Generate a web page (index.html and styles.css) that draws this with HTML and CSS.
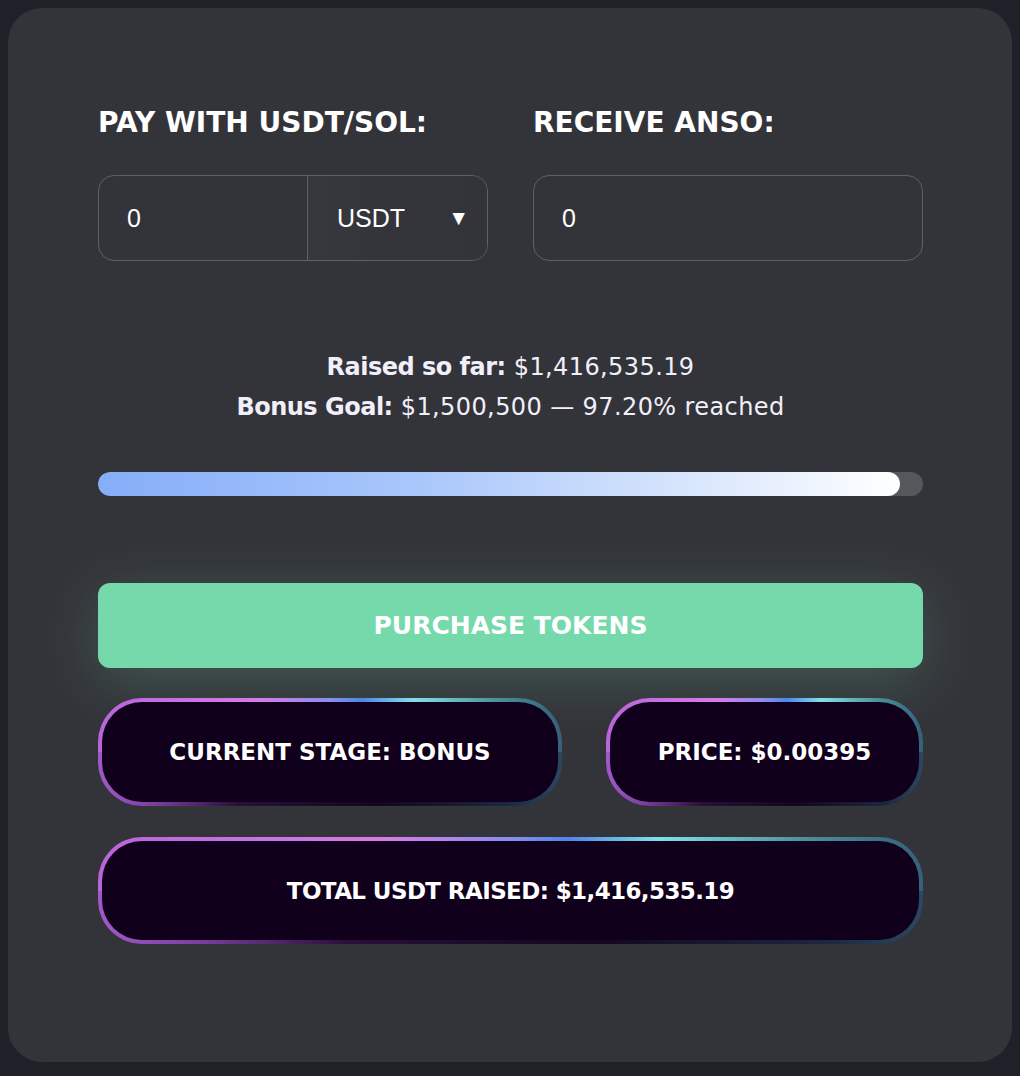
FILE: index.html
```html
<!DOCTYPE html>
<html lang="en">
<head>
<meta charset="utf-8">
<title>Presale</title>
<link rel="stylesheet" href="styles.css">
</head>
<body>
<div class="card">
  <div class="fields">
    <div class="field">
      <div class="field-label">PAY WITH USDT/SOL:</div>
      <div class="inputbox split">
        <div class="value">0</div>
        <div class="select"><span>USDT</span><span class="arrow">▼</span></div>
      </div>
    </div>
    <div class="field">
      <div class="field-label">RECEIVE ANSO:</div>
      <div class="inputbox">
        <div class="value">0</div>
      </div>
    </div>
  </div>

  <div class="stats">
    <div><b>Raised so far:</b> $1,416,535.19</div>
    <div><b>Bonus Goal:</b> $1,500,500 — 97.20% reached</div>
  </div>

  <div class="progress"><div class="fill" style="width: 97.2%"></div></div>

  <div class="buy">PURCHASE TOKENS</div>

  <div class="pills">
    <div class="pill">CURRENT STAGE: BONUS</div>
    <div class="pill">PRICE: $0.00395</div>
  </div>
  <div class="pill total">TOTAL USDT RAISED: $1,416,535.19</div>
</div>
</body>
</html>
```
FILE: styles.css
```css
html, body {
  background: #1f2028;
}
body {
  margin: 8px;
  font-family: "DejaVu Sans", "Open Sans", sans-serif;
  color: #ffffff;
}
.card {
  background: #333439;
  border-radius: 34px;
  padding: 95px 89px 118px 90px;
  min-height: 1054px;
  box-sizing: border-box;
}
.fields {
  display: grid;
  grid-template-columns: 390px 390px;
  column-gap: 45px;
}
.field-label {
  font-size: 28px;
  font-weight: 700;
  line-height: 40px;
  margin-bottom: 32px;
}
.inputbox {
  height: 86px;
  box-sizing: border-box;
  border: 1px solid #5f6065;
  border-radius: 16px;
  display: flex;
  align-items: center;
  font-family: "Liberation Sans", Arial, sans-serif;
  font-size: 25px;
  overflow: hidden;
}
.value {
  padding-left: 28px;
  flex: 1;
}
.select {
  width: 180px;
  align-self: stretch;
  border-left: 1px solid #5f6065;
  display: flex;
  align-items: center;
  justify-content: space-between;
  padding: 0 18px 0 29px;
  box-sizing: border-box;
  background: linear-gradient(90deg, #37383e 0%, #34353a 40%, #333439 100%);
}
.arrow {
  font-size: 21px;
}
.stats {
  margin-top: 86px;
  text-align: center;
  font-size: 24px;
  line-height: 40px;
  color: #f1eff9;
  letter-spacing: 0.4px;
}
.stats b {
  font-weight: 700;
  letter-spacing: -0.5px;
}
.progress {
  margin-top: 45px;
  height: 24px;
  border-radius: 12px;
  background: #56575b;
  overflow: hidden;
}
.fill {
  height: 100%;
  border-radius: 12px;
  background: linear-gradient(90deg, #86adf8 0%, #a9c7fb 40%, #dae7fc 75%, #ffffff 100%);
}
.buy {
  margin-top: 87px;
  height: 85px;
  border-radius: 12px;
  background: #76d9ab;
  display: flex;
  align-items: center;
  justify-content: center;
  font-size: 25px;
  font-weight: 700;
  box-shadow: 0 12px 55px rgba(118, 217, 171, 0.22);
}
.pills {
  margin-top: 30px;
  display: flex;
  justify-content: space-between;
}
.pill {
  height: 108px;
  box-sizing: border-box;
  border: 4px solid transparent;
  border-radius: 44px;
  display: flex;
  align-items: center;
  justify-content: center;
  font-size: 23px;
  font-weight: 700;
  background:
    linear-gradient(#10001c, #10001c) padding-box,
    linear-gradient(90deg, #a05ac8 0%, #7b3f9e 12%, #2a0f3a 30%, #14061f 60%, #1c2640 88%, #2b4860 100%) border-box bottom / 100% 50% no-repeat,
    linear-gradient(90deg, #b865d8 0%, #d67ce8 35%, #8a8cf0 50%, #4f86ea 57%, #7fe1e8 68%, #4a9099 86%, #35607a 100%) border-box;
}
.pills .pill:first-child {
  width: 464px;
}
.pills .pill:last-child {
  width: 317px;
}
.total {
  margin-top: 31px;
  height: 107px;
  letter-spacing: -0.6px;
}
```
